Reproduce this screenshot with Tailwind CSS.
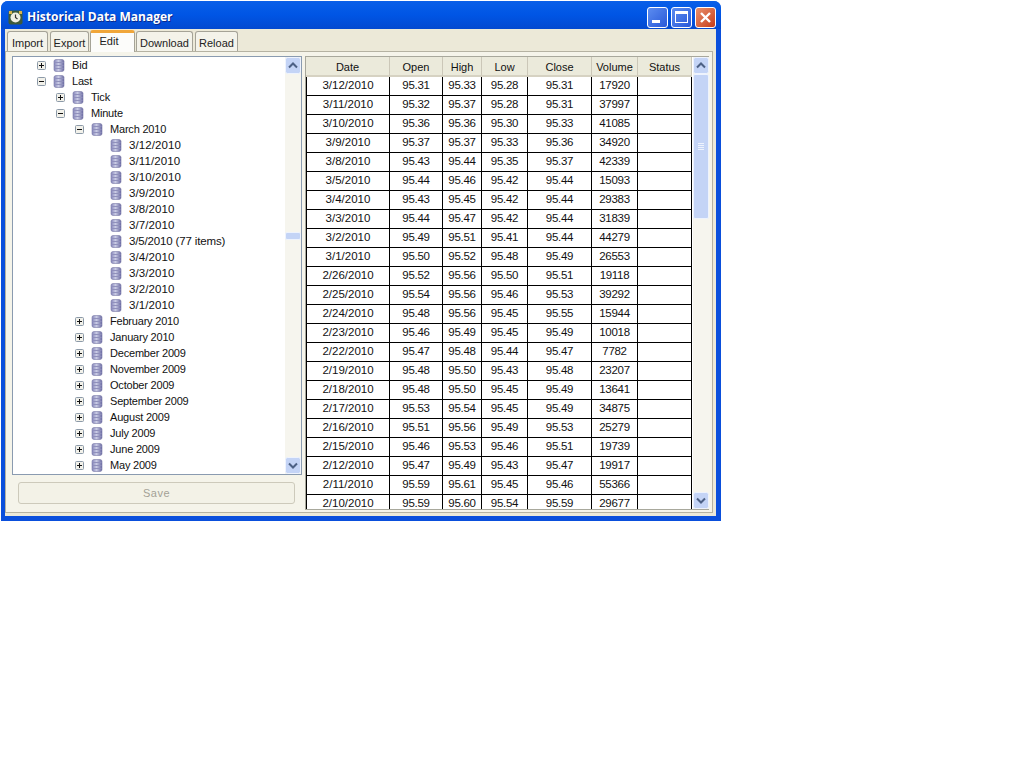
<!DOCTYPE html>
<html lang="en">
<head>
  <meta charset="utf-8">
  <title>Historical Data Manager</title>
  <script src="https://cdn.jsdelivr.net/npm/@tailwindcss/browser@4"></script>
</head>
<body class="bg-white h-[757px] overflow-hidden font-['Liberation_Sans',sans-serif] text-[11px] text-[#111]">
  <!-- shared icons -->
  <svg class="absolute w-0 h-0" width="0" height="0">
    <defs>
      <linearGradient id="dbfill" x1="0" x2="1" y1="0" y2="0">
        <stop offset="0" stop-color="#8484ba"/>
        <stop offset="0.45" stop-color="#c9cbe4"/>
        <stop offset="1" stop-color="#6a6aa2"/>
      </linearGradient>
      <symbol id="db" viewBox="0 0 11 13">
        <rect x="0.5" y="0.5" width="10" height="12" rx="2" fill="url(#dbfill)" stroke="#7a7aa8" stroke-width="0.6"/>
        <path d="M1 3.5h9M1 6.5h9M1 9.5h9" stroke="#9090bc" stroke-width="1"/>
      </symbol>
      <symbol id="plus" viewBox="0 0 9 9">
        <rect x="0.5" y="0.5" width="8" height="8" rx="1" fill="#f2f1ea" stroke="#8c9aa8"/>
        <path d="M2 4.5h5M4.5 2v5" stroke="#111"/>
      </symbol>
      <symbol id="minus" viewBox="0 0 9 9">
        <rect x="0.5" y="0.5" width="8" height="8" rx="1" fill="#f2f1ea" stroke="#8c9aa8"/>
        <path d="M2 4.5h5" stroke="#111"/>
      </symbol>
      <symbol id="sb-up" viewBox="0 0 16 17">
        <rect x="0.5" y="0.5" width="15" height="16" rx="2" fill="#c4d4f6" stroke="#eef3fd"/>
        <path d="M4 10.5l4-4 4 4" fill="none" stroke="#4d6185" stroke-width="2"/>
      </symbol>
      <symbol id="sb-down" viewBox="0 0 16 17">
        <rect x="0.5" y="0.5" width="15" height="16" rx="2" fill="#c4d4f6" stroke="#eef3fd"/>
        <path d="M4 6.5l4 4 4-4" fill="none" stroke="#4d6185" stroke-width="2"/>
      </symbol>
    </defs>
  </svg>

  <!-- Window -->
  <div class="ml-px mt-px w-[720px] h-[520px] flex flex-col rounded-t-[7px] bg-[#0a4fdc] overflow-hidden">
    <!-- Title bar -->
    <div class="h-[28px] shrink-0 flex items-center pt-1 pl-[7px] pr-[5px] bg-gradient-to-b from-[#0a5fe8] via-[#0055e5] to-[#0349d0]">
      <svg width="15" height="15" viewBox="0 0 15 15" class="shrink-0">
        <rect x="0.5" y="0.5" width="14" height="14" rx="2" fill="#3c5a3a"/>
        <circle cx="7.5" cy="7.5" r="5" fill="#f0efe2"/>
        <path d="M7.5 4.5v3l2 1.5" fill="none" stroke="#333" stroke-width="1.2"/>
        <path d="M1 1h3v3H1zM11 1h3v3h-3z" fill="#d9b44a"/>
      </svg>
      <span class="ml-1 font-['Open_Sans',sans-serif] font-bold text-[12px] text-white [text-shadow:1px_1px_#0a2a8c]">Historical Data Manager</span>
      <div class="ml-auto flex gap-[3px]">
        <div class="w-[21px] h-[21px] rounded-[3px] border border-white bg-gradient-to-br from-[#5c8cf0] to-[#2a58d8] flex items-end pl-1 pb-1"><div class="w-[8px] h-[3px] bg-white"></div></div>
        <div class="w-[21px] h-[21px] rounded-[3px] border border-white bg-gradient-to-br from-[#5c8cf0] to-[#2a58d8] flex items-center justify-center"><div class="w-[13px] h-[12px] border border-white border-t-[3px]"></div></div>
        <div class="w-[21px] h-[21px] rounded-[3px] border border-white bg-gradient-to-br from-[#e8906c] to-[#c63a14] flex items-center justify-center">
          <svg width="13" height="13" viewBox="0 0 13 13"><path d="M2 2l9 9M11 2l-9 9" stroke="#fff" stroke-width="2.4"/></svg>
        </div>
      </div>
    </div>

    <!-- Client area -->
    <div class="flex-1 min-h-0 ml-1 mr-[5px] mb-[5px] bg-[#ece9d8] flex flex-col">
      <!-- Tabs -->
      <div class="h-[22px] shrink-0 flex items-end pl-[2px] text-[#222]">
        <div class="w-[41px] h-[20px] mr-[2px] rounded-t-[3px] border border-b-0 border-[#a5a397] bg-[#f4f3ea] text-center leading-[23px]">Import</div>
        <div class="w-[39px] h-[20px] mr-px rounded-t-[3px] border border-b-0 border-[#a5a397] bg-[#f4f3ea] text-center leading-[23px]">Export</div>
        <div class="w-[45px] h-[22px] mr-px rounded-t-[3px] border-x border-[#a5a397] border-t-[3px] border-t-[#f0a63a] bg-[#fcfcfa] text-center leading-[16px] -mb-px relative pr-[7px]">Edit</div>
        <div class="w-[57px] h-[20px] mr-[2px] rounded-t-[3px] border border-b-0 border-[#a5a397] bg-[#f4f3ea] text-center leading-[23px]">Download</div>
        <div class="w-[43px] h-[20px] rounded-t-[3px] border border-b-0 border-[#a5a397] bg-[#f4f3ea] text-center leading-[23px]">Reload</div>
      </div>

      <!-- Tab page -->
      <div class="flex-1 min-h-0 mb-[3px] mr-[3px] border border-[#b5b2a2] bg-[#f5f4ea] pt-1 pl-[6px] pr-[2px] flex gap-[3px]">
        <!-- Left column -->
        <div class="w-[290px] shrink-0 flex flex-col">
          <div class="h-[419px] shrink-0 border border-[#8a9bb0] bg-white flex">
            <div class="flex-1 min-w-0 overflow-hidden whitespace-nowrap tracking-[-0.2px] [&>div]:h-4 [&>div]:flex [&>div]:items-center [&>div]:leading-4 [&_svg]:shrink-0">
              <div class="pl-6"><svg width="9" height="9"><use href="#plus"/></svg><svg class="ml-[7px] mr-[7px]" width="12" height="13"><use href="#db"/></svg>Bid</div>
              <div class="pl-6"><svg width="9" height="9"><use href="#minus"/></svg><svg class="ml-[7px] mr-[7px]" width="12" height="13"><use href="#db"/></svg>Last</div>
              <div class="pl-[43px]"><svg width="9" height="9"><use href="#plus"/></svg><svg class="ml-[7px] mr-[7px]" width="12" height="13"><use href="#db"/></svg>Tick</div>
              <div class="pl-[43px]"><svg width="9" height="9"><use href="#minus"/></svg><svg class="ml-[7px] mr-[7px]" width="12" height="13"><use href="#db"/></svg>Minute</div>
              <div class="pl-[62px]"><svg width="9" height="9"><use href="#minus"/></svg><svg class="ml-[7px] mr-[7px]" width="12" height="13"><use href="#db"/></svg>March 2010</div>
              <div class="pl-[97px] text-[11.5px] tracking-[0.1px]"><svg class="mr-[7px]" width="12" height="13"><use href="#db"/></svg>3/12/2010</div>
              <div class="pl-[97px] text-[11.5px] tracking-[0.1px]"><svg class="mr-[7px]" width="12" height="13"><use href="#db"/></svg>3/11/2010</div>
              <div class="pl-[97px] text-[11.5px] tracking-[0.1px]"><svg class="mr-[7px]" width="12" height="13"><use href="#db"/></svg>3/10/2010</div>
              <div class="pl-[97px] text-[11.5px] tracking-[0.1px]"><svg class="mr-[7px]" width="12" height="13"><use href="#db"/></svg>3/9/2010</div>
              <div class="pl-[97px] text-[11.5px] tracking-[0.1px]"><svg class="mr-[7px]" width="12" height="13"><use href="#db"/></svg>3/8/2010</div>
              <div class="pl-[97px] text-[11.5px] tracking-[0.1px]"><svg class="mr-[7px]" width="12" height="13"><use href="#db"/></svg>3/7/2010</div>
              <div class="pl-[97px] text-[11.5px] tracking-[-0.15px]"><svg class="mr-[7px]" width="12" height="13"><use href="#db"/></svg>3/5/2010 (77 items)</div>
              <div class="pl-[97px] text-[11.5px] tracking-[0.1px]"><svg class="mr-[7px]" width="12" height="13"><use href="#db"/></svg>3/4/2010</div>
              <div class="pl-[97px] text-[11.5px] tracking-[0.1px]"><svg class="mr-[7px]" width="12" height="13"><use href="#db"/></svg>3/3/2010</div>
              <div class="pl-[97px] text-[11.5px] tracking-[0.1px]"><svg class="mr-[7px]" width="12" height="13"><use href="#db"/></svg>3/2/2010</div>
              <div class="pl-[97px] text-[11.5px] tracking-[0.1px]"><svg class="mr-[7px]" width="12" height="13"><use href="#db"/></svg>3/1/2010</div>
              <div class="pl-[62px]"><svg width="9" height="9"><use href="#plus"/></svg><svg class="ml-[7px] mr-[7px]" width="12" height="13"><use href="#db"/></svg>February 2010</div>
              <div class="pl-[62px]"><svg width="9" height="9"><use href="#plus"/></svg><svg class="ml-[7px] mr-[7px]" width="12" height="13"><use href="#db"/></svg>January 2010</div>
              <div class="pl-[62px]"><svg width="9" height="9"><use href="#plus"/></svg><svg class="ml-[7px] mr-[7px]" width="12" height="13"><use href="#db"/></svg>December 2009</div>
              <div class="pl-[62px]"><svg width="9" height="9"><use href="#plus"/></svg><svg class="ml-[7px] mr-[7px]" width="12" height="13"><use href="#db"/></svg>November 2009</div>
              <div class="pl-[62px]"><svg width="9" height="9"><use href="#plus"/></svg><svg class="ml-[7px] mr-[7px]" width="12" height="13"><use href="#db"/></svg>October 2009</div>
              <div class="pl-[62px]"><svg width="9" height="9"><use href="#plus"/></svg><svg class="ml-[7px] mr-[7px]" width="12" height="13"><use href="#db"/></svg>September 2009</div>
              <div class="pl-[62px]"><svg width="9" height="9"><use href="#plus"/></svg><svg class="ml-[7px] mr-[7px]" width="12" height="13"><use href="#db"/></svg>August 2009</div>
              <div class="pl-[62px]"><svg width="9" height="9"><use href="#plus"/></svg><svg class="ml-[7px] mr-[7px]" width="12" height="13"><use href="#db"/></svg>July 2009</div>
              <div class="pl-[62px]"><svg width="9" height="9"><use href="#plus"/></svg><svg class="ml-[7px] mr-[7px]" width="12" height="13"><use href="#db"/></svg>June 2009</div>
              <div class="pl-[62px]"><svg width="9" height="9"><use href="#plus"/></svg><svg class="ml-[7px] mr-[7px]" width="12" height="13"><use href="#db"/></svg>May 2009</div>
            </div>
            <!-- tree scrollbar -->
            <div class="w-4 shrink-0 bg-[#f6f5ee] flex flex-col justify-between relative">
              <svg width="16" height="17"><use href="#sb-up"/></svg>
              <div class="absolute top-[175px] left-0 w-4 h-2 rounded-[2px] bg-[#c4d4f6] border border-[#eef3fd]"></div>
              <svg width="16" height="17"><use href="#sb-down"/></svg>
            </div>
          </div>
          <button class="mt-[7px] ml-[6px] w-[277px] h-[22px] rounded-[3px] border border-[#cdcabb] bg-[#f3f2e7] text-[#a3a196] leading-[20px] tracking-[0.5px]">Save</button>
        </div>

        <!-- Data grid -->
        <div class="w-[404px] h-[454px] shrink-0 border border-[#a8a89c] bg-white flex">
          <div class="w-[386px] shrink-0 overflow-hidden">
            <table class="w-[386px] table-fixed border-separate border-spacing-0 text-center leading-[16px] [&_td]:p-0 [&_td]:pb-[2px] [&_td]:h-[19px] [&_td]:text-[11.5px] [&_td]:tracking-[-0.3px] [&_td]:border-r [&_td]:border-b [&_td]:border-black [&_td:first-child]:border-l [&_td:first-child]:tracking-normal [&_th]:p-0 [&_th]:pt-[2px] [&_th]:h-5 [&_th]:font-normal [&_th]:bg-[#ebeadb] [&_th]:border-r [&_th]:border-r-[#cbc7b8] [&_th]:border-b-2 [&_th]:border-b-[#d6d2c2]">
              <thead>
                <tr><th class="w-[84px]">Date</th><th class="w-[53px]">Open</th><th class="w-[39px]">High</th><th class="w-[46px]">Low</th><th class="w-[64px]">Close</th><th class="w-[46px]">Volume</th><th class="w-[54px]">Status</th></tr>
              </thead>
              <tbody>
                <tr><td>3/12/2010</td><td>95.31</td><td>95.33</td><td>95.28</td><td>95.31</td><td>17920</td><td></td></tr>
                <tr><td>3/11/2010</td><td>95.32</td><td>95.37</td><td>95.28</td><td>95.31</td><td>37997</td><td></td></tr>
                <tr><td>3/10/2010</td><td>95.36</td><td>95.36</td><td>95.30</td><td>95.33</td><td>41085</td><td></td></tr>
                <tr><td>3/9/2010</td><td>95.37</td><td>95.37</td><td>95.33</td><td>95.36</td><td>34920</td><td></td></tr>
                <tr><td>3/8/2010</td><td>95.43</td><td>95.44</td><td>95.35</td><td>95.37</td><td>42339</td><td></td></tr>
                <tr><td>3/5/2010</td><td>95.44</td><td>95.46</td><td>95.42</td><td>95.44</td><td>15093</td><td></td></tr>
                <tr><td>3/4/2010</td><td>95.43</td><td>95.45</td><td>95.42</td><td>95.44</td><td>29383</td><td></td></tr>
                <tr><td>3/3/2010</td><td>95.44</td><td>95.47</td><td>95.42</td><td>95.44</td><td>31839</td><td></td></tr>
                <tr><td>3/2/2010</td><td>95.49</td><td>95.51</td><td>95.41</td><td>95.44</td><td>44279</td><td></td></tr>
                <tr><td>3/1/2010</td><td>95.50</td><td>95.52</td><td>95.48</td><td>95.49</td><td>26553</td><td></td></tr>
                <tr><td>2/26/2010</td><td>95.52</td><td>95.56</td><td>95.50</td><td>95.51</td><td>19118</td><td></td></tr>
                <tr><td>2/25/2010</td><td>95.54</td><td>95.56</td><td>95.46</td><td>95.53</td><td>39292</td><td></td></tr>
                <tr><td>2/24/2010</td><td>95.48</td><td>95.56</td><td>95.45</td><td>95.55</td><td>15944</td><td></td></tr>
                <tr><td>2/23/2010</td><td>95.46</td><td>95.49</td><td>95.45</td><td>95.49</td><td>10018</td><td></td></tr>
                <tr><td>2/22/2010</td><td>95.47</td><td>95.48</td><td>95.44</td><td>95.47</td><td>7782</td><td></td></tr>
                <tr><td>2/19/2010</td><td>95.48</td><td>95.50</td><td>95.43</td><td>95.48</td><td>23207</td><td></td></tr>
                <tr><td>2/18/2010</td><td>95.48</td><td>95.50</td><td>95.45</td><td>95.49</td><td>13641</td><td></td></tr>
                <tr><td>2/17/2010</td><td>95.53</td><td>95.54</td><td>95.45</td><td>95.49</td><td>34875</td><td></td></tr>
                <tr><td>2/16/2010</td><td>95.51</td><td>95.56</td><td>95.49</td><td>95.53</td><td>25279</td><td></td></tr>
                <tr><td>2/15/2010</td><td>95.46</td><td>95.53</td><td>95.46</td><td>95.51</td><td>19739</td><td></td></tr>
                <tr><td>2/12/2010</td><td>95.47</td><td>95.49</td><td>95.43</td><td>95.47</td><td>19917</td><td></td></tr>
                <tr><td>2/11/2010</td><td>95.59</td><td>95.61</td><td>95.45</td><td>95.46</td><td>55366</td><td></td></tr>
                <tr><td>2/10/2010</td><td>95.59</td><td>95.60</td><td>95.54</td><td>95.59</td><td>29677</td><td></td></tr>
              </tbody>
            </table>
          </div>
          <!-- grid scrollbar -->
          <div class="w-[17px] ml-px shrink-0 bg-[#f6f5ee] flex flex-col">
            <svg width="16" height="17" class="shrink-0"><use href="#sb-up"/></svg>
            <div class="w-4 h-[145px] rounded-[2px] bg-[#c4d4f6] border border-[#eef3fd] flex flex-col items-center justify-center gap-px">
              <div class="w-[6px] h-px bg-[#eef3fd]"></div>
              <div class="w-[6px] h-px bg-[#eef3fd]"></div>
              <div class="w-[6px] h-px bg-[#eef3fd]"></div>
              <div class="w-[6px] h-px bg-[#eef3fd]"></div>
            </div>
            <svg width="16" height="17" class="mt-auto shrink-0"><use href="#sb-down"/></svg>
          </div>
        </div>
      </div>
    </div>
  </div>
</body>
</html>
